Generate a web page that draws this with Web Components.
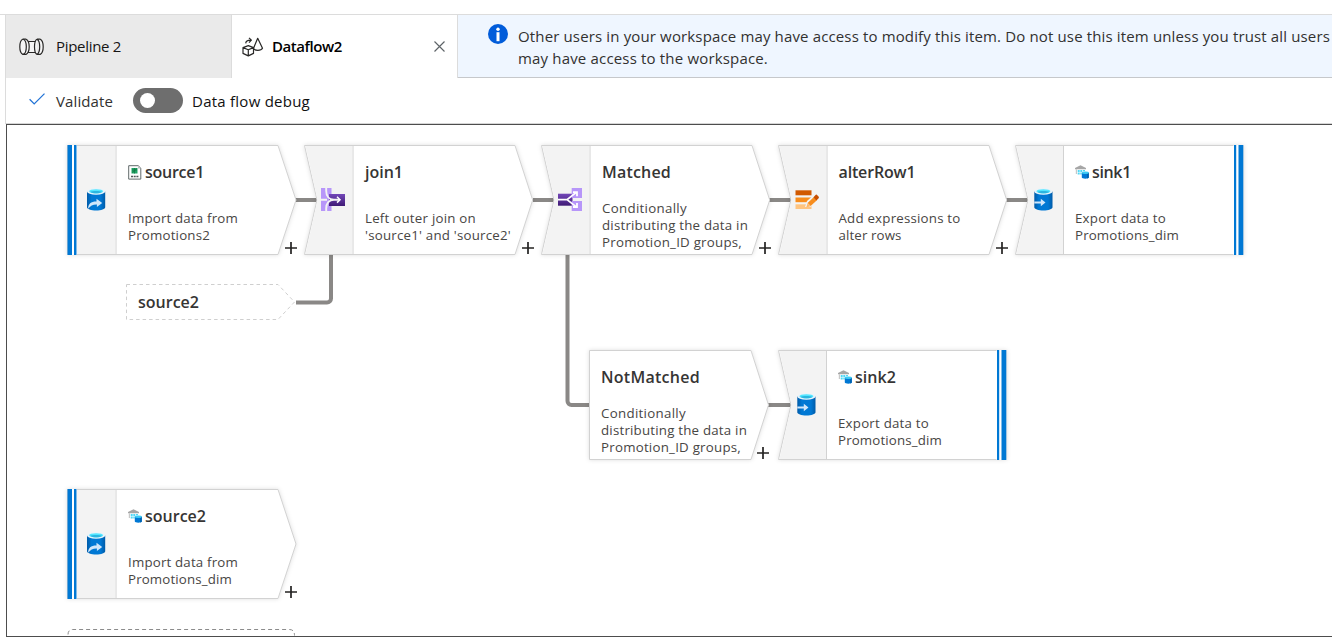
<!DOCTYPE html>
<html lang="en">
<head>
<meta charset="utf-8">
<title>Dataflow2</title>
<style>
  html, body { margin: 0; height: 100%; overflow: hidden; background: #fff; }
  body { font-family: "Open Sans", "Noto Sans", sans-serif; color: #1b1a19; }
</style>
</head>
<body>
<dataflow-app></dataflow-app>
<script>
const define = (name, html, setup) => {
  const template = document.createElement('template');
  template.innerHTML = html;
  customElements.define(name, class extends HTMLElement {
    connectedCallback() {
      if (this.shadowRoot) return;
      this.attachShadow({ mode: 'open' }).append(template.content.cloneNode(true));
      if (setup) setup(this, this.shadowRoot);
    }
  });
};

// A single line of text tracked to a given width.
define('fit-text', `<style>:host{display:block;width:max-content;white-space:pre}</style><slot></slot>`, el => {
  const w = parseFloat(el.getAttribute('w'));
  if (!w) return;
  const natural = el.getBoundingClientRect().width;
  el.style.letterSpacing = ((w - natural) / el.textContent.length).toFixed(4) + 'px';
});

const CYL = `<defs><linearGradient id="g" x1="0" x2="1"><stop stop-color="#005ba8"/><stop offset=".25" stop-color="#0078d4"/><stop offset=".75" stop-color="#0078d4"/><stop offset="1" stop-color="#005ba8"/></linearGradient></defs>
<path fill="url(#g)" d="M3 4v15.700c0 1.800 4 3.300 9.100 3.300s9.100-1.500 9.100-3.300V4z"/><ellipse cx="12.100" cy="4" rx="9.100" ry="3.200" fill="#e8f3fb"/><ellipse cx="12.100" cy="3.800" rx="7" ry="2.100" fill="#50e6ff"/><path fill="#2bb5e0" d="M6.200 4.500c2-1.200 9.800-1.200 11.800 0-2.200 1.800-9.600 1.800-11.800 0z"/>`;
const ICONS = {
  source: ['24 24', `<g transform="translate(0 -.5)">${CYL}<path fill="#cfe6fa" d="M4.200 21.300c-.3-4.900 3-7.400 8.300-7.300v-2.800l5.700 4.200-5.300 4v-2.500c-4-.1-6.500 1.100-8.700 4.400z"/></g>`],
  sink: ['24 24', `<g transform="translate(-.7 -.5)">${CYL}<path fill="#cfe6fa" d="M3 13.900h6.500v-2.600l4.700 3.700-4.700 3.700V16H3z"/></g>`],
  join: ['24 24', `<defs><linearGradient id="g" x1="0" y1="0" x2="0" y2="1"><stop stop-color="#7347b8"/><stop offset="1" stop-color="#3f1a75"/></linearGradient></defs>
    <path fill="#b796f9" d="M0 0h10.300v23H0z"/><path fill="url(#g)" d="M8 6h16v12H8z"/><path fill="#b796f9" d="M8 0h2.300v6H8zM8 18h2.300v5H8z"/>
    <path fill="none" stroke="#f3f3f3" stroke-width="1.900" d="M5.200 0v2.700C5.200 8 8 11.700 13 11.700h5M5.200 23v-2.600c0-5 2.800-8.700 7.800-8.700M0 11.700h6"/><path fill="none" stroke="#fff" stroke-width="1.500" d="M16 8.800l3 2.900-3 2.900"/>`],
  split: ['24 24', `<defs><linearGradient id="g" x1="0" y1="0" x2="0" y2="1"><stop stop-color="#7347b8"/><stop offset="1" stop-color="#3f1a75"/></linearGradient></defs>
    <path fill="url(#g)" d="M0 5.700h15.500v12H0z"/><path fill="#b796f9" d="M13.700 0H24v10H13.700zM13.700 13H24v10H13.700z"/><path fill="#f3f3f3" d="M14.500 10H24v3h-9.500z"/>
    <path fill="none" stroke="#fff" stroke-width="1.800" d="M0 11.600h9l9-7M9 11.600l9 7M15 4.200h4v4M15 19h4v-4"/>`],
  alter: ['24 24', `<path fill="#d15900" d="M.5 2.300h16v5h-16z"/><path fill="#f78d1e" d="M.5 9.500h16v4.700h-16z"/><path fill="#ffc47f" d="M.5 16.300h16V21h-16z"/>
    <path fill="#f3f3f3" d="M10 19l2-6 8.500-7.500L25 10l-9.500 9z"/><path fill="#f78d1e" d="M12.600 15l6.300-6 3 3.300-6.300 5.700z"/><path fill="#c74f00" d="M18.500 9.200l1.800-2c.7-.8 1.400-.8 2 0l1.200 1.300c.6.700.6 1.400-.1 2l-2 1.900z"/><path fill="#ffb868" d="M12.600 15l3 3.200-4.400 1.200z"/>`],
  csv: ['14 15', `<path fill="#fff" stroke="#626a6b" d="M.7.700h9.500l2.600 2.500v10.900H.7z"/><path fill="#b9c0c0" d="M10 1l2.500 2.400H10z"/><path fill="#21a366" d="M3.500 3h6v5.500h-6z"/><path stroke="#137844" stroke-width=".8" fill="none" d="M4 7.500l5-4M4 5h5M6.500 3v5.500"/><path stroke="#4f5757" stroke-width="1.500" stroke-dasharray="2 .7" d="M3 11.500h7.500"/>`],
  house: ['14 14', `<path fill="#a6a6a6" d="M0 4.300V3L5.500.2 11 3v1.300z"/><path fill="#c8c8c8" d="M.8 4.300H2V9H.8z"/><path fill="#50d8f5" d="M2.700 5h2v2h-2zM5.300 5h2v2h-2zM2.700 7.600h2v2h-2zM5.300 7.600h1.300v2H5.300zM8 5h2v1.300H8z"/><path fill="#0078d4" d="M6.800 7.700v4.900c0 1.500 7 1.500 7 0V7.700z"/><path fill="#0063b1" d="M12 7.700h1.800v4.900c0 .4-.7.800-1.800 1z"/><ellipse cx="10.300" cy="7.700" rx="3.500" ry="1.200" fill="#3ccbf4"/>`],
  pipeline: ['26 18', `<g fill="#f5f5f5" stroke="#292827" stroke-width="1.200"><path d="M8 3.500h9v11H8z"/><path d="M3.800 1.200H7c2.300 1 3.200 3.800 3.200 7.600s-.9 6.600-3.200 7.600H3.800C1.700 15.500.8 12.500.8 8.800s.9-6.700 3-7.600z"/><path fill="none" d="M4.300 1.200c2.100.8 3 3.800 3 7.600s-.9 6.800-3 7.600"/><path d="M18 1.200h3.200c2.100 1 3 3.800 3 7.600s-.9 6.600-3 7.600H18c2-1 2.700-3.800 2.700-7.600S20 2.200 18 1.200zM18 1.200c-1.900.9-2.500 3.800-2.500 7.600s.6 6.700 2.500 7.600"/></g>`],
  dataflow: ['22 20', `<g fill="none" stroke="#292827" stroke-width="1.200" stroke-linejoin="round"><path d="M1 10.600l5.300-2 5.200 2v5.800l-5.200 2.500L1 16.400zM1 10.600l5.300 2.200 5.200-2.200M6.300 12.800v6"/><path d="M15.700 1.300l-4.200 10c1 2.700 7.600 2.700 9 0z"/><path d="M3.700 6.400c.2-2.400 1.500-3.300 5.200-3.200M7 .8l2.400 2.400L7 5.600"/></g>`],
  check: ['16 12', `<path fill="none" stroke="#2374d6" stroke-width="1.300" d="M.6 6.300l4.600 4.600L15.500.600"/>`],
  close: ['11 11', `<path stroke="#5e6468" stroke-width="1.150" d="M.5.500l10 10M10.500.5l-10 10"/>`],
  info: ['20 20', `<circle cx="10" cy="10" r="10" fill="#015cda"/><circle cx="10" cy="5.200" r="1.700" fill="#fff"/><path fill="#fff" d="M8.500 8.200h3v9h-3z"/>`],
  plus: ['12 12', `<path stroke="#242322" stroke-width="1.700" d="M6 0v12M0 6h12"/>`]
};
define('ui-icon', `<style>:host{display:block;flex:none;line-height:0}svg{display:block;overflow:visible}</style>`, (el, root) => {
  const [size, body] = ICONS[el.getAttribute('name')];
  const [w, h] = size.split(' ');
  root.innerHTML += `<svg width="${w}" height="${h}" viewBox="0 0 ${size}">${body}</svg>`;
});

define('editor-tab', `<style>
  :host{display:flex;box-sizing:border-box;width:226px;height:63px;padding-left:13px;align-items:center;font-size:15px;line-height:20px;border-right:1px solid #dcdcdc;background:#eaeaea;color:#161514}
  :host([active]){background:#fff;padding-left:10px;font-weight:600;color:#000}
  .label{padding:0 0 2px 11px}:host([active]) .label{padding-left:8px}
  .close{margin-left:auto;padding-right:12px}
</style><slot name="icon"></slot><div class="label"><slot></slot></div><div class="close"><slot name="close"></slot></div>`);

define('info-banner', `<style>
  :host{display:flex;flex:1;min-width:0;box-sizing:border-box;height:63px;padding:9px 0 0 30px;background:#eff6ff;border-bottom:1px solid #c6c8cb;font-size:15px;line-height:22px;color:#323130;overflow:hidden}
  .text{padding:1px 0 0 10px}
</style><ui-icon name="info"></ui-icon><div class="text"><slot></slot></div>`);

define('toggle-switch', `<style>
  :host{display:flex;box-sizing:border-box;width:50px;height:25px;padding:5px 7px;border-radius:13px;background:#6e6e6e}
  i{width:15px;height:15px;border-radius:50%;background:#fff}
</style><i></i>`);

define('flow-toolbar', `<style>
  :host{display:flex;align-items:center;box-sizing:border-box;height:46px;padding:0 0 0 23px;font-size:15px;line-height:20px;color:#323130;border-bottom:1px solid #d6d6d6}
  toggle-switch{margin:0 9px 0 20px}
  ui-icon{margin:-4px 11px 0 0}
  .debug{color:#111}
</style><ui-icon name="check"></ui-icon><fit-text w="57">Validate</fit-text><toggle-switch></toggle-switch><fit-text class="debug" w="118">Data flow debug</fit-text>`);

// One stage of the flow: outline, icon strip, name and summary.
define('flow-node', `<style>
  :host{display:block;width:230px;height:110px;position:absolute;left:var(--x);top:var(--y)}
  svg.shape{position:absolute;inset:0;overflow:visible;filter:drop-shadow(0 0 2px rgba(0,0,0,.13))}
  .row{position:relative;display:flex;height:110px}
  .strip{flex:none;box-sizing:border-box;width:49px;padding:43px 0 0 17px}
  :host([kind=branch]) .strip{display:none}
  .body{padding:16px 0 0 12px;width:150px}
  :host([kind=sink]) .body{padding-left:11px}
  .name{display:flex;gap:3px;height:22px;font-size:16px;line-height:22px;font-weight:600;color:#363534}
  .name ui-icon{padding-top:4px}
  .sum{margin-top:27px;font-size:13.300px;line-height:17px;color:#484644}
  :host([lines="3"]) .sum{margin-top:17px}
  .plus{position:absolute;left:218px;top:97px}
  :host([kind=branch]) .plus{left:168px}
  :host([kind=sink]) .plus{display:none}
</style><svg class="shape" width="230" height="110"></svg>
<div class="row"><div class="strip"></div><div class="body"><div class="name"><slot name="name"></slot></div><div class="sum"><slot></slot></div></div></div>
<ui-icon class="plus" name="plus"></ui-icon>`, (el, root) => {
  const kind = el.getAttribute('kind');
  const line = 'stroke="#d2d2d2"';
  let shape;
  if (kind === 'source') shape = `<path fill="#fff" ${line} d="M.5.500H211L229 55 211 109.500H.5z"/><path fill="#f3f3f3" d="M10 1h38v108H10z"/><path ${line} d="M49 1v108"/><path fill="#fff" d="M1 0h9v110H1z"/><path fill="#0078d4" d="M.5 0H5v110H.5zM7 0h2.500v110H7z"/>`;
  if (kind === 'step') shape = `<path fill="#fff" ${line} d="M.5.500H211L228.700 55 211 109.500H.5L13 55z"/><path fill="#f3f3f3" d="M1.500 1H48v108H1.500L13.600 55z"/><path ${line} d="M49 1v108"/>`;
  if (kind === 'sink') shape = `<path fill="#fff" ${line} d="M.5.500H228.500V109.500H.5L13 55z"/><path fill="#f3f3f3" d="M1.500 1H48v108H1.500L13.600 55z"/><path ${line} d="M48.500 1v108"/><path fill="#fff" d="M218.500 0h10v110h-10z"/><path fill="#0078d4" d="M219 0h2.200v110H219zM223.500 0h4.800v110h-4.800z"/>`;
  if (kind === 'branch') shape = `<path fill="#fff" ${line} d="M.5.500H162L179.500 55 162 109.500H.5z"/>`;
  root.querySelector('.shape').innerHTML = shape;
  const icon = el.getAttribute('icon');
  if (icon) root.querySelector('.strip').innerHTML = `<ui-icon name="${icon}"></ui-icon>`;
  const store = el.getAttribute('store');
  if (store) root.querySelector('.name').insertAdjacentHTML('afterbegin', `<ui-icon name="${store}"></ui-icon>`);
});

define('flow-reference', `<style>
  :host{display:flex;align-items:center;box-sizing:border-box;width:170px;height:37px;padding-left:12px;position:absolute;left:var(--x);top:var(--y);font-size:16px;line-height:22px;font-weight:600;color:#363534}
  svg{position:absolute;inset:0}.t{position:relative;top:-1px}
</style><svg width="170" height="37"><path fill="#fff" stroke="#cfcfcf" stroke-dasharray="3.500 3" d="M.5.500H152L168.500 18 152 35.500H.5z"/></svg><div class="t"><slot></slot></div>`);

define('flow-canvas', `<style>
  :host{display:block;position:relative;box-sizing:border-box;height:513px;border:1px solid #4d4d4d;border-right:0;overflow:hidden;background:#fff}
  svg.links{position:absolute;left:-7px;top:-125px}
</style>
<svg class="links" width="1332" height="637"><g fill="none" stroke="#8a8886" stroke-width="4">
  <path d="M296 200h21M533 200h21M769 200h22M1006 200h22M768 405h23M296 302.500h31a4 4 0 0 0 4-4V255M567.500 255v146a4 4 0 0 0 4 4H589"/></g>
  <path fill="none" stroke="#8c8c8c" stroke-dasharray="4 3" d="M68 634.500q0-5 5-5h216.500q5 0 5 6"/></svg>
<slot></slot>`);

define('dataflow-app', `<style>
  :host{display:flex;flex-direction:column;box-sizing:border-box;height:637px;padding-top:14px;overflow:hidden}
  .tabs{display:flex;border-top:1px solid #dcdcdc;padding-left:5px}
  .tabs editor-tab:first-child,flow-toolbar{border-left:1px solid #dcdcdc}
  .tabs editor-tab:first-child{width:227px}
  .tools{padding-left:5px}
  flow-canvas{margin-left:6px}
</style>
<div class="tabs">
  <editor-tab><ui-icon slot="icon" name="pipeline"></ui-icon><fit-text w="65">Pipeline 2</fit-text></editor-tab>
  <editor-tab active><ui-icon slot="icon" name="dataflow"></ui-icon><fit-text w="70">Dataflow2</fit-text><ui-icon slot="close" name="close"></ui-icon></editor-tab>
  <info-banner><fit-text w="812">Other users in your workspace may have access to modify this item. Do not use this item unless you trust all users</fit-text><fit-text w="250">may have access to the workspace.</fit-text></info-banner>
</div>
<div class="tools"><flow-toolbar></flow-toolbar></div>
<flow-canvas>
  <flow-node kind="source" icon="source" store="csv" style="--x:60px;--y:20px"><fit-text slot="name" w="59">source1</fit-text><fit-text w="110">Import data from</fit-text><fit-text w="82">Promotions2</fit-text></flow-node>
  <flow-node kind="step" icon="join" style="--x:297px;--y:20px"><fit-text slot="name" w="38">join1</fit-text><fit-text w="111">Left outer join on</fit-text><fit-text w="146">'source1' and 'source2'</fit-text></flow-node>
  <flow-node kind="step" icon="split" lines="3" style="--x:534px;--y:20px"><fit-text slot="name" w="69">Matched</fit-text><fit-text w="85">Conditionally</fit-text><fit-text w="146">distributing the data in</fit-text><fit-text w="140">Promotion_ID groups,</fit-text></flow-node>
  <flow-node kind="step" icon="alter" style="--x:770.500px;--y:20px"><fit-text slot="name" w="77">alterRow1</fit-text><fit-text w="122">Add expressions to</fit-text><fit-text w="63">alter rows</fit-text></flow-node>
  <flow-node kind="sink" icon="sink" store="house" style="--x:1008px;--y:20px"><fit-text slot="name" w="39">sink1</fit-text><fit-text w="91">Export data to</fit-text><fit-text w="104">Promotions_dim</fit-text></flow-node>
  <flow-reference style="--x:119px;--y:159px"><fit-text w="61">source2</fit-text></flow-reference>
  <flow-node kind="branch" lines="3" style="--x:582px;--y:225px"><fit-text slot="name" w="99">NotMatched</fit-text><fit-text w="85">Conditionally</fit-text><fit-text w="146">distributing the data in</fit-text><fit-text w="140">Promotion_ID groups,</fit-text></flow-node>
  <flow-node kind="sink" icon="sink" store="house" style="--x:771px;--y:225px"><fit-text slot="name" w="41">sink2</fit-text><fit-text w="91">Export data to</fit-text><fit-text w="104">Promotions_dim</fit-text></flow-node>
  <flow-node kind="source" icon="source" store="house" style="--x:60px;--y:364px"><fit-text slot="name" w="61">source2</fit-text><fit-text w="110">Import data from</fit-text><fit-text w="104">Promotions_dim</fit-text></flow-node>
</flow-canvas>`);
</script>
</body>
</html>
